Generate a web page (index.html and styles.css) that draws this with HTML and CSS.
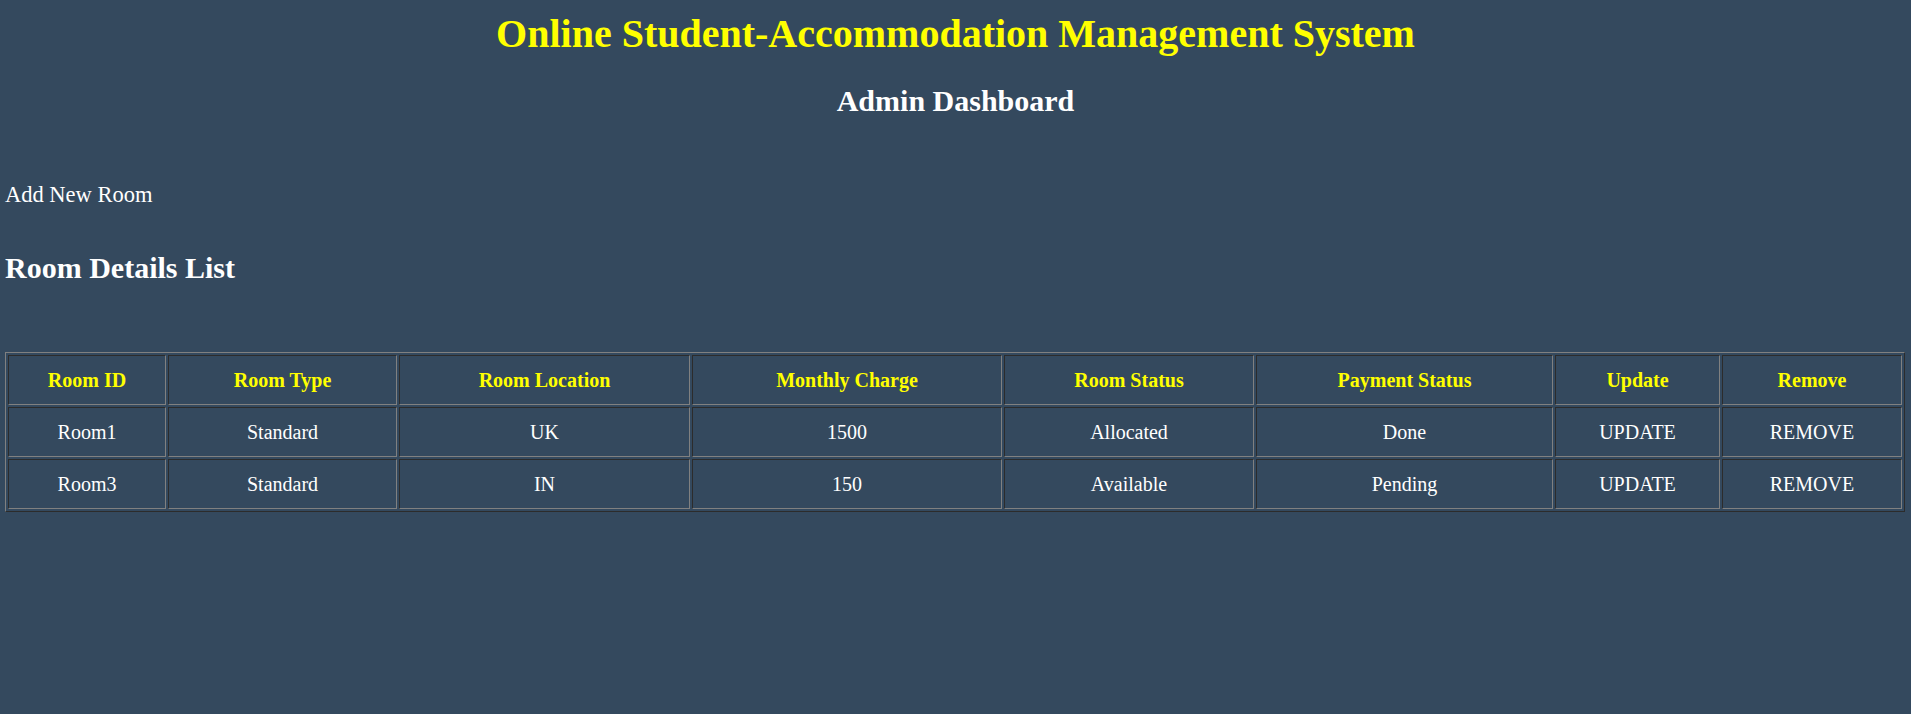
FILE: index.html
```html
<!DOCTYPE html>
<html lang="en">
<head>
<meta charset="utf-8">
<title>Admin Dashboard</title>
<link rel="stylesheet" href="styles.css">
</head>
<body>
<h1 class="title">Online Student-Accommodation Management System</h1>
<h2 class="subtitle">Admin Dashboard</h2>
<p class="add"><a href="#" class="add-link">Add New Room</a></p>
<h2 class="section">Room Details List</h2>
<table class="rooms">
  <thead>
    <tr>
      <th class="c1">Room ID</th>
      <th class="c2">Room Type</th>
      <th class="c3">Room Location</th>
      <th class="c4">Monthly Charge</th>
      <th class="c5">Room Status</th>
      <th class="c6">Payment Status</th>
      <th class="c7">Update</th>
      <th class="c8">Remove</th>
    </tr>
  </thead>
  <tbody>
    <tr>
      <td>Room1</td>
      <td>Standard</td>
      <td>UK</td>
      <td>1500</td>
      <td>Allocated</td>
      <td>Done</td>
      <td><a href="#" class="action">UPDATE</a></td>
      <td><a href="#" class="action">REMOVE</a></td>
    </tr>
    <tr>
      <td>Room3</td>
      <td>Standard</td>
      <td>IN</td>
      <td>150</td>
      <td>Available</td>
      <td>Pending</td>
      <td><a href="#" class="action">UPDATE</a></td>
      <td><a href="#" class="action">REMOVE</a></td>
    </tr>
  </tbody>
</table>
</body>
</html>
```
FILE: styles.css
```css
html, body {
  background: #34495e;
}
body {
  margin: 0;
  padding: 0 5px;
  font-family: "Liberation Serif", "Times New Roman", serif;
  font-size: 20px;
  color: #ffffff;
}
.title {
  margin: 10px 0 27px;
  font-size: 40px;
  font-weight: bold;
  text-align: center;
  color: #ffff00;
}
.subtitle {
  margin: 0 0 64px;
  font-size: 30px;
  text-align: center;
  color: #ffffff;
}
.add {
  margin: 0 0 43px;
  font-size: 22.5px;
}
.add-link {
  color: #ffffff;
  text-decoration: none;
}
.section {
  margin: 0 0 67px;
  font-size: 30px;
  color: #ffffff;
}
.rooms {
  border: 1px outset #808080;
  border-spacing: 2px;
  font-size: 20px;
}
.rooms th,
.rooms td {
  border: 1px inset #808080;
  padding: 12.5px;
  text-align: center;
  line-height: 23px;
}
.rooms th {
  color: #ffff00;
  font-weight: bold;
}
.rooms td {
  color: #ffffff;
}
.action {
  color: #ffffff;
  text-decoration: none;
}
.c1 { width: 131px; }
.c2 { width: 202px; }
.c3 { width: 264px; }
.c4 { width: 283px; }
.c5 { width: 223px; }
.c6 { width: 270px; }
.c7 { width: 138px; }
.c8 { width: 153px; }
```
